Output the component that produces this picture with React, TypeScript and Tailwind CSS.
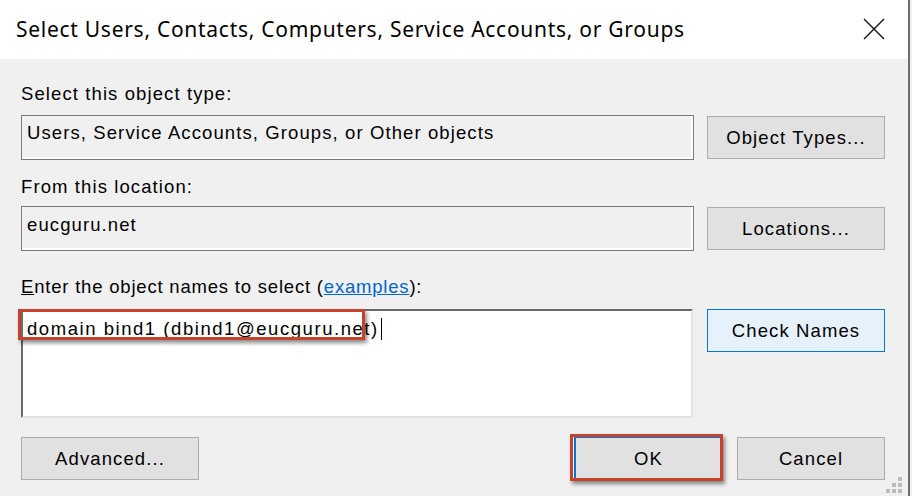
import React from 'react';

const body = { fontFamily: '"Liberation Sans", Arial, sans-serif' };

function Btn({
  label,
  className = '',
}: {
  label: React.ReactNode;
  className?: string;
}) {
  return (
    <button
      type="button"
      className={`h-[43px] flex items-center justify-center text-[18.5px] tracking-[1.1px] text-black border ${className}`}
    >
      {label}
    </button>
  );
}

export default function App() {
  return (
    <div className="w-[912px] h-[496px] bg-[#f0f0f0]">
      <div
        className="w-[910px] h-[496px] bg-[#f0f0f0] border-r-2 border-[#6e6e6e] flex flex-col overflow-hidden relative"
        style={body}
      >
        {/* title bar */}
        <div className="h-[59px] bg-white flex items-center justify-between pl-4 pr-[23px] shrink-0">
          <span
            className="text-[21px] tracking-[0.72px] text-black"
            style={{ fontFamily: '"Noto Sans", "Open Sans", sans-serif' }}
          >
            Select Users, Contacts, Computers, Service Accounts, or Groups
          </span>
          <svg width="22" height="22" viewBox="0 0 22 22" className="mt-[-2px]">
            <path d="M1 1 L21 21 M21 1 L1 21" stroke="#111" strokeWidth="1.4" fill="none" />
          </svg>
        </div>

        <div className="flex flex-col pl-[21px] pr-[23px] text-[18.5px] tracking-[1.1px] text-black">
          <div className="mt-[24px] h-[22px] leading-[22px]">Select this object type:</div>
          <div className="mt-[10px] flex gap-[13px] items-start">
            <div className="w-[673px] h-[45px] border border-[#7a7a7a] shadow-[inset_-2px_-2px_0_#fff] pl-[5px] pt-[6px] leading-[22px]">
              Users, Service Accounts, Groups, or Other objects
            </div>
            <Btn label="Object Types..." className="w-[178px] mt-[1px] bg-[#e1e1e1] border-[#adadad]" />
          </div>

          <div className="mt-[16px] h-[22px] leading-[22px]">From this location:</div>
          <div className="mt-[8px] flex gap-[13px] items-start">
            <div className="w-[673px] h-[45px] border border-[#7a7a7a] shadow-[inset_-2px_-2px_0_#fff] pl-[5px] pt-[7px] leading-[22px]">
              eucguru.net
            </div>
            <Btn label="Locations..." className="w-[178px] mt-[1px] bg-[#e1e1e1] border-[#adadad]" />
          </div>

          <div className="mt-[25px] h-[22px] leading-[22px] tracking-[0.8px]">
            <span className="underline">E</span>nter the object names to select (
            <span className="text-[#0066cc] underline">examples</span>):
          </div>
          <div className="mt-[11px] flex gap-[14px] items-start">
            <div className="relative w-[672px] h-[109px] bg-white border-t-2 border-l-2 border-t-[#6a6a6a] border-l-[#6a6a6a] border-r-2 border-b-2 border-r-[#e3e3e3] border-b-[#e3e3e3] pl-[4px] pt-[7px]">
              <div className="flex items-center h-[22px] leading-[22px] tracking-[1.55px]">
                <span>domain bind1 (dbind1@eucguru.net)</span>
                <span className="inline-block w-[1px] h-[22px] bg-black ml-[2px]" />
              </div>
              <div className="absolute left-[-5px] top-[-2px] w-[347px] h-[31px] border-[3px] border-[#c5432b] shadow-[2px_3px_4px_rgba(0,0,0,0.45)]" />
            </div>
            <Btn label="Check Names" className="w-[178px] bg-[#e5f1fb] border-[#0078d7]" />
          </div>

          <div className="mt-[19px] flex items-start">
            <Btn label="Advanced..." className="w-[178px] bg-[#e1e1e1] border-[#adadad]" />
            <div className="ml-auto flex gap-[15px]">
              <div className="relative">
                <Btn label="OK" className="w-[148px] bg-[#e1e1e1] border-[#0078d7] border-l-2" />
                <div className="absolute left-[-4px] top-[-3px] right-[-1px] bottom-[-1px] border-[3px] border-[#c5432b] shadow-[2px_3px_4px_rgba(0,0,0,0.45)]" />
              </div>
              <Btn label="Cancel" className="w-[148px] bg-[#e1e1e1] border-[#adadad]" />
            </div>
          </div>
        </div>

        {/* resize grip */}
        <div className="absolute right-[6px] bottom-[3px] grid grid-cols-3 gap-[2px]">
          <span className="w-[4px] h-[4px]" />
          <span className="w-[4px] h-[4px]" />
          <span className="w-[4px] h-[4px] bg-[#bcbcbc]" />
          <span className="w-[4px] h-[4px]" />
          <span className="w-[4px] h-[4px] bg-[#bcbcbc]" />
          <span className="w-[4px] h-[4px] bg-[#bcbcbc]" />
          <span className="w-[4px] h-[4px] bg-[#bcbcbc]" />
          <span className="w-[4px] h-[4px] bg-[#bcbcbc]" />
          <span className="w-[4px] h-[4px] bg-[#bcbcbc]" />
        </div>
      </div>
    </div>
  );
}
